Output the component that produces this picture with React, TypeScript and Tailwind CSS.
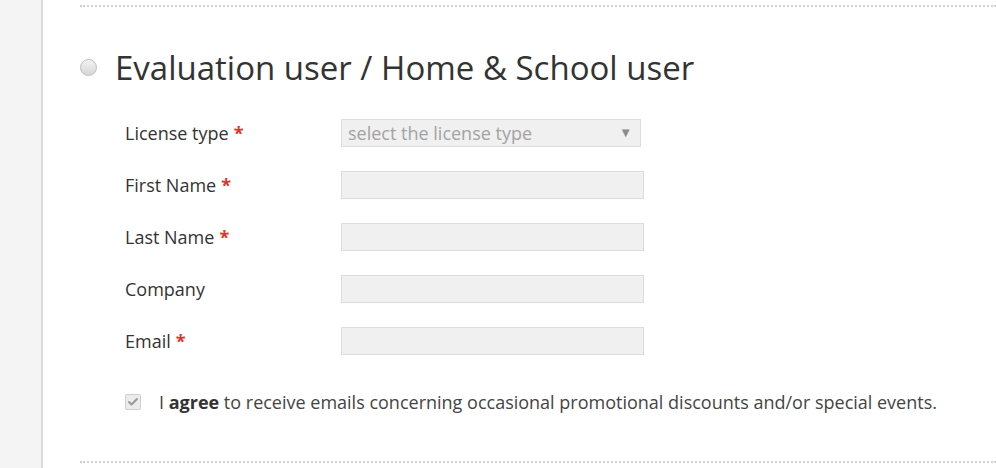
import { Check } from 'lucide-react';

const fields = [
  { label: 'License type', required: true, select: true },
  { label: 'First Name', required: true },
  { label: 'Last Name', required: true },
  { label: 'Company', required: false },
  { label: 'Email', required: true },
];

const App = () => {
  return (
    <div
      className="flex h-[468px] w-[996px] overflow-hidden bg-white text-[#333]"
      style={{ fontFamily: '"Open Sans", "Liberation Sans", sans-serif' }}
    >
      {/* Sidebar */}
      <div className="w-[43px] shrink-0 border-r-2 border-[#dadada] bg-[#f4f4f4]" />

      {/* Main */}
      <div className="flex-1 pl-[37px] pt-[5px]">
        <div className="border-t-2 border-dotted border-[#cfcfcf]">
          {/* Heading */}
          <div className="mt-[40px] flex h-[40px] items-center">
            <span className="h-[17px] w-[17px] rounded-full border border-[#bdbdbd] bg-gradient-to-b from-[#f2f2f2] to-[#d6d6d6]" />
            <h2 className="ml-[18px] text-[33px] leading-none text-[#333]">
              Evaluation user / Home &amp; School user
            </h2>
          </div>

          {/* Form */}
          <div className="mt-[20px] pl-[45px]">
            {fields.map((f) => (
              <div key={f.label} className="flex h-[52px] items-center">
                <label className="w-[216px] text-[18px]">
                  {f.label}
                  {f.required && <span className="ml-[5px] font-bold text-[#e0342a]">*</span>}
                </label>
                {f.select ? (
                  <div className="flex h-[28px] w-[300px] items-center justify-between border border-[#dcdcdc] bg-[#f0f0f0] pl-[6px] pr-[8px]">
                    <span className="text-[18px] text-[#a3a3a3]">select the license type</span>
                    <span className="text-[13px] text-[#8a8a8a]">▼</span>
                  </div>
                ) : (
                  <input
                    className="h-[28px] w-[303px] border border-[#dcdcdc] bg-[#f0f0f0] outline-none"
                    type="text"
                  />
                )}
              </div>
            ))}
          </div>

          {/* Agree */}
          <div className="mt-[25px] flex h-[20px] items-center pl-[45px]">
            <span className="flex h-[16px] w-[16px] items-center justify-center rounded-[2px] border border-[#cfcfcf] bg-[#ececec]">
              <Check className="h-[12px] w-[12px] text-[#9a9a9a]" strokeWidth={4} />
            </span>
            <p className="ml-[18px] text-[18px] text-[#444]">
              I <b className="font-bold text-[#333]">agree</b> to receive emails concerning occasional promotional
              discounts and/or special events.
            </p>
          </div>

          <div className="mt-[49px] border-t-2 border-dotted border-[#cfcfcf]" />
        </div>
      </div>
    </div>
  );
};

export default App;
